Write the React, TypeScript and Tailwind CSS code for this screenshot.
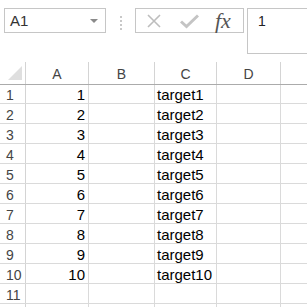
const cols = [26, 63, 66, 62, 64, 40];
const letters = ["A", "B", "C", "D", ""];
const rowHeights = [19, 20, 20, 20, 20, 20, 20, 20, 20, 20, 20, 20];

function Toolbar() {
  return (
    <div className="flex h-[54px] items-start pt-2">
      <div className="ml-1 flex h-[25px] w-[102px] items-center justify-between border border-[#c6c6c6] pl-[5px] pr-[7px] text-[15px] text-[#333]">
        <span>A1</span>
        <svg width="8" height="4" viewBox="0 0 8 4">
          <path d="M0 0h8L4 4z" fill="#8a8a8a" />
        </svg>
      </div>
      <div className="ml-[14px] mt-[8px] flex flex-col gap-[2px]">
        <span className="h-[2px] w-[2px] bg-[#c8c8c8]" />
        <span className="h-[2px] w-[2px] bg-[#c8c8c8]" />
        <span className="h-[2px] w-[2px] bg-[#c8c8c8]" />
        <span className="h-[2px] w-[2px] bg-[#c8c8c8]" />
      </div>
      <div className="ml-[13px] flex h-[25px] w-[109px] items-center border border-[#c6c6c6]">
        <svg className="ml-[10px]" width="16" height="16" viewBox="0 0 16 16">
          <path d="M2 2L14 14M14 2L2 14" stroke="#bdbdbd" strokeWidth="1.6" />
        </svg>
        <svg className="ml-[18px]" width="19" height="16" viewBox="0 0 19 16">
          <path d="M1 8.5L6.5 13.5L18 2.5" stroke="#c4c4c4" strokeWidth="3" fill="none" />
        </svg>
        <span className="ml-[16px] font-['Liberation_Serif',serif] text-[22px] italic leading-none text-[#555]">
          fx
        </span>
      </div>
      <div className="ml-[3px] h-[46px] flex-1 border border-r-0 border-[#c6c6c6] pl-[10px] pt-[3px] text-[14px] text-[#222]">
        1
      </div>
    </div>
  );
}

function HeaderRow() {
  return (
    <div className="flex h-[23px] border-b border-[#ababab]">
      <div
        className="relative shrink-0 border-r border-[#d4d4d4]"
        style={{ width: cols[0] }}
      >
        <svg className="absolute bottom-[4px] right-[3px]" width="14" height="14" viewBox="0 0 14 14">
          <path d="M14 0V14H0z" fill="#dfdfdf" />
        </svg>
      </div>
      {letters.map((l, i) => (
        <div
          key={i}
          className="flex shrink-0 items-center justify-center border-r border-[#d4d4d4] pt-[2px] text-[14px] text-[#444]"
          style={{ width: cols[i + 1] }}
        >
          {l}
        </div>
      ))}
    </div>
  );
}

function Row({ n, h }: { n: number; h: number }) {
  const a = n <= 10 ? String(n) : "";
  const c = n <= 10 ? `target${n}` : "";
  return (
    <div className="flex border-b border-[#dadada] leading-[16px]" style={{ height: h }}>
      <div
        className="flex shrink-0 items-end border-r border-[#d4d4d4] pl-[6px] text-[14px] text-[#444]"
        style={{ width: cols[0] }}
      >
        {n <= 11 ? n : ""}
      </div>
      <div
        className="flex shrink-0 items-end justify-end border-r border-[#dadada] pr-[3px] text-[15px] text-black"
        style={{ width: cols[1] }}
      >
        {a}
      </div>
      <div className="shrink-0 border-r border-[#dadada]" style={{ width: cols[2] }} />
      <div
        className="flex shrink-0 items-end border-r border-[#dadada] pl-[2px] text-[15px] text-black"
        style={{ width: cols[3] }}
      >
        {c}
      </div>
      <div className="shrink-0 border-r border-[#dadada]" style={{ width: cols[4] }} />
      <div className="shrink-0 border-r border-[#dadada]" style={{ width: cols[5] }} />
    </div>
  );
}

export default function App() {
  return (
    <div className="h-[307px] w-[307px] overflow-hidden bg-white font-['Liberation_Sans',sans-serif] leading-[18px]">
      <Toolbar />
      <div className="mt-[8px]">
        <HeaderRow />
        {rowHeights.map((h, i) => (
          <Row key={i} n={i + 1} h={h} />
        ))}
      </div>
    </div>
  );
}
